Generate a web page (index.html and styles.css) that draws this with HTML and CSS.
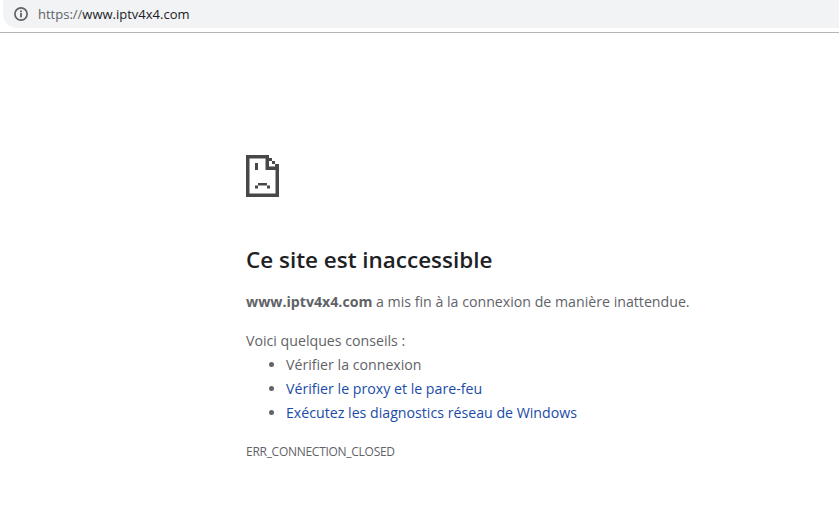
FILE: index.html
```html
<!DOCTYPE html>
<html lang="fr">
<head>
<meta charset="utf-8">
<title>Ce site est inaccessible</title>
<link rel="stylesheet" href="styles.css">
</head>
<body>
<header class="chrome">
  <div class="omnibox">
    <svg class="info" width="16" height="16" viewBox="0 0 16 16" aria-hidden="true">
      <circle cx="8" cy="8" r="6.1" fill="none" stroke="#5f6368" stroke-width="1.7"/>
      <rect x="7.1" y="7" width="1.8" height="4.4" fill="#5f6368"/>
      <rect x="7.1" y="4.4" width="1.8" height="1.8" fill="#5f6368"/>
    </svg>
    <span class="url"><span class="scheme">https://</span>www.iptv4x4.com</span>
  </div>
</header>
<main class="content">
  <svg class="sad" width="33" height="42" viewBox="0 0 33 42" aria-hidden="true">
    <path fill="#484848" d="M0 0H23V3.5H3.5V38.5H29.5V15H33V42H0Z"/>
    <path fill="#484848" d="M19.5 0H23V11.5H33V15H19.5Z"/>
    <path fill="#484848" d="M23 3H26V6H23ZM26 6H29V9H26ZM29 9H33V12H29Z"/>
    <path fill="#484848" d="M9 8H12V15H9Z"/>
    <path fill="#484848" d="M12 28H21V30.5H12ZM9 30.5H12V33.5H9ZM21 30.5H24V33.5H21Z"/>
  </svg>
  <h1 class="title">Ce site est inaccessible</h1>
  <p class="summary"><strong>www.iptv4x4.com</strong> a mis fin à la connexion de manière inattendue.</p>
  <p class="tips-label">Voici quelques conseils :</p>
  <ul class="tips">
    <li>Vérifier la connexion</li>
    <li><a href="#">Vérifier le proxy et le pare-feu</a></li>
    <li><a href="#">Exécutez les diagnostics réseau de Windows</a></li>
  </ul>
  <p class="code">ERR_CONNECTION_CLOSED</p>
</main>
</body>
</html>
```
FILE: styles.css
```css
* { box-sizing: border-box; }
html, body { margin: 0; padding: 0; background: #fff; }
body { width: 839px; height: 514px; overflow: hidden; font-family: "Open Sans", "Noto Sans", sans-serif; }
.chrome { height: 33px; border-bottom: 1px solid #b4b4b4; padding-bottom: 4px; }
.omnibox { height: 28px; margin-left: 3px; background: #f1f3f4; border-radius: 0 0 0 14px; display: flex; align-items: center; padding-left: 10px; gap: 9px; }
.url { font-size: 13px; color: #202124; }
.scheme { color: #5f6368; }
.content { padding: 122px 0 0 246px; width: 720px; color: #5f6368; }
.sad { display: block; }
.title { margin: 47px 0 0; font-size: 22.45px; line-height: 32px; font-weight: 600; color: #202124; }
.summary { margin: 14px 0 0; font-size: 14.18px; line-height: 24px; }
.summary strong { font-weight: 700; }
.tips-label { margin: 15px 0 0; font-size: 14.18px; line-height: 24px; }
.tips { margin: 0; padding: 0 0 0 40px; font-size: 14.18px; line-height: 24px; }
.tips a { color: #1a4ca8; text-decoration: none; }
.code { margin: 19px 0 0; font-size: 12px; line-height: 16px; letter-spacing: -0.28px; text-transform: uppercase; }
```
